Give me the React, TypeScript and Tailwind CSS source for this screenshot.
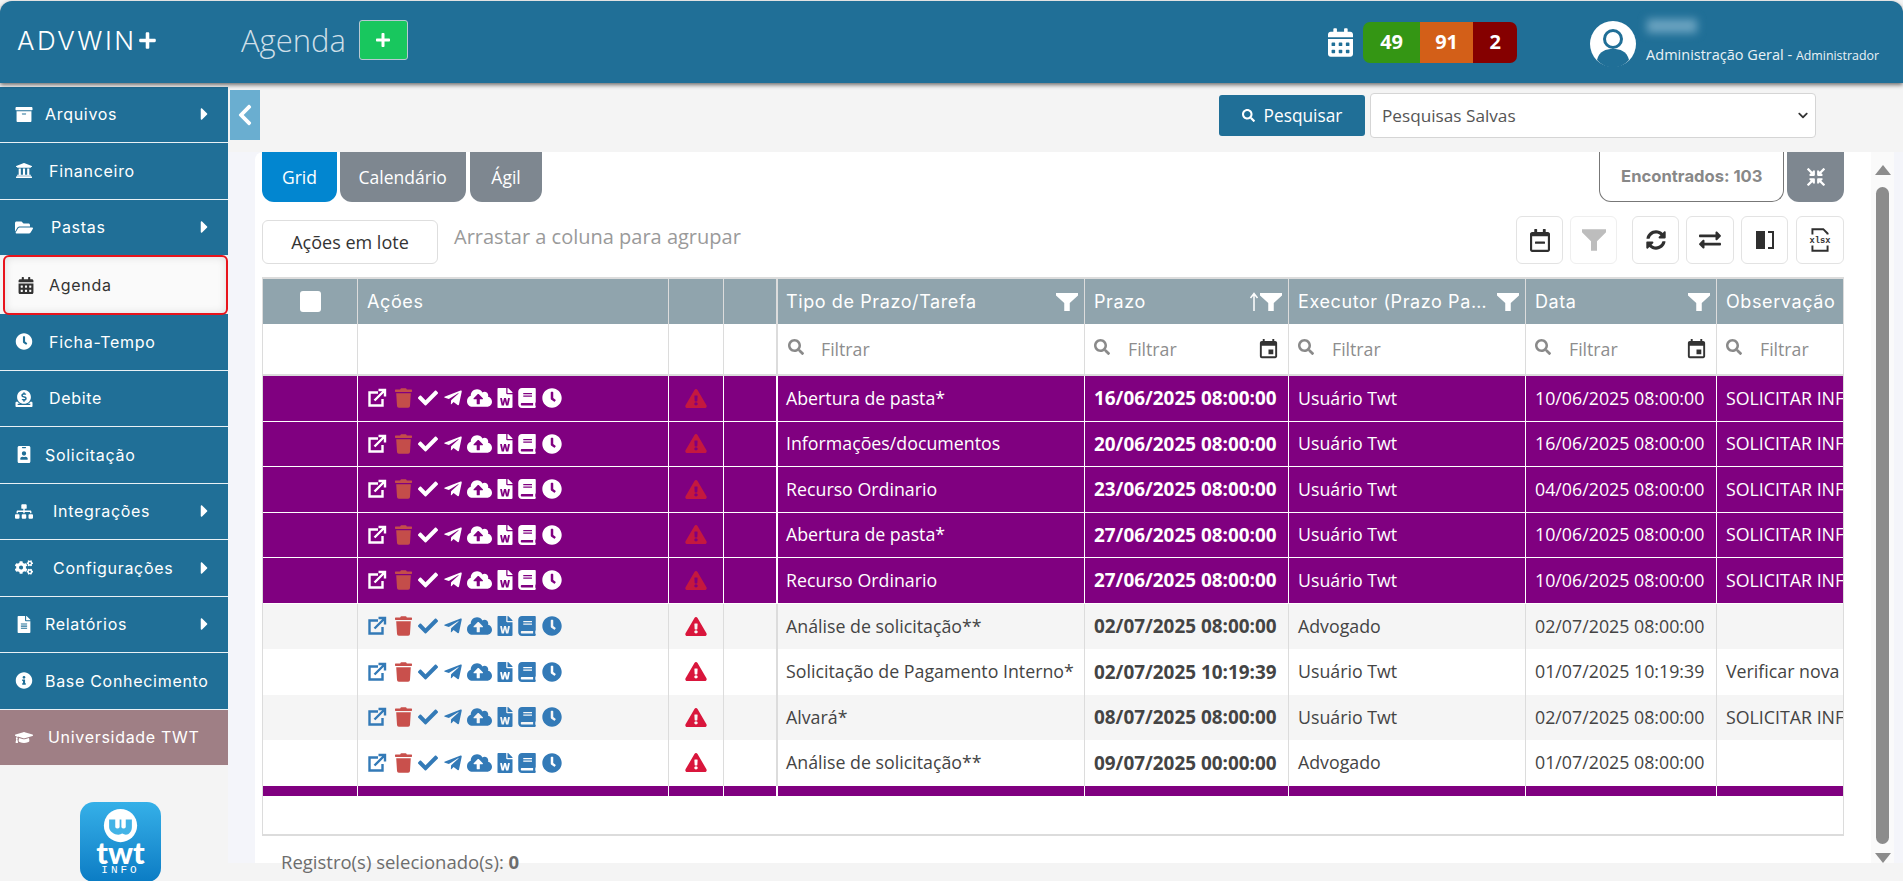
import React from 'react';
import {
  FaArchive, FaBook, FaCalendarAlt, FaCaretRight, FaCheck, FaChevronDown, FaChevronLeft, FaClock, FaCloudUploadAlt,
  FaCogs, FaCompressArrowsAlt, FaDonate, FaExchangeAlt, FaExclamationTriangle, FaFileAlt, FaFileWord, FaFolderOpen,
  FaGraduationCap, FaIdBadge, FaInfoCircle, FaPlus, FaRegCalendarMinus, FaSearch, FaSitemap, FaSyncAlt,
  FaTelegramPlane, FaTrash, FaUniversity,
} from 'react-icons/fa';
import { MdEvent } from 'react-icons/md';

const menu = [
  { label: 'Arquivos', icon: FaArchive, gap: 'ml-[12px]', caret: true },
  { label: 'Financeiro', icon: FaUniversity, gap: 'ml-[16px]' },
  { label: 'Pastas', icon: FaFolderOpen, gap: 'ml-[18px]', caret: true },
  { label: 'Agenda', icon: FaCalendarAlt, gap: 'ml-[14px]', active: true },
  { label: 'Ficha-Tempo', icon: FaClock, gap: 'ml-[16px]' },
  { label: 'Debite', icon: FaDonate, gap: 'ml-[16px]' },
  { label: 'Solicitação', icon: FaIdBadge, gap: 'ml-[12px]' },
  { label: 'Integrações', icon: FaSitemap, gap: 'ml-[20px]', caret: true },
  { label: 'Configurações', icon: FaCogs, gap: 'ml-[20px]', caret: true },
  { label: 'Relatórios', icon: FaFileAlt, gap: 'ml-[12px]', caret: true },
  { label: 'Base Conhecimento', icon: FaInfoCircle, gap: 'ml-[12px]' },
  { label: 'Universidade TWT', icon: FaGraduationCap, gap: 'ml-[15px]', special: true },
];

const rows = [
  ['Abertura de pasta*', '16/06/2025 08:00:00', 'Usuário Twt', '10/06/2025 08:00:00', 'SOLICITAR INFORMAÇÕES', true],
  ['Informações/documentos', '20/06/2025 08:00:00', 'Usuário Twt', '16/06/2025 08:00:00', 'SOLICITAR INFORMAÇÕES', true],
  ['Recurso Ordinario', '23/06/2025 08:00:00', 'Usuário Twt', '04/06/2025 08:00:00', 'SOLICITAR INFORMAÇÕES', true],
  ['Abertura de pasta*', '27/06/2025 08:00:00', 'Usuário Twt', '10/06/2025 08:00:00', 'SOLICITAR INFORMAÇÕES', true],
  ['Recurso Ordinario', '27/06/2025 08:00:00', 'Usuário Twt', '10/06/2025 08:00:00', 'SOLICITAR INFORMAÇÕES', true],
  ['Análise de solicitação**', '02/07/2025 08:00:00', 'Advogado', '02/07/2025 08:00:00', '', false],
  ['Solicitação de Pagamento Interno*', '02/07/2025 10:19:39', 'Usuário Twt', '01/07/2025 10:19:39', 'Verificar nova documentação', false],
  ['Alvará*', '08/07/2025 08:00:00', 'Usuário Twt', '02/07/2025 08:00:00', 'SOLICITAR INFORMAÇÕES', false],
  ['Análise de solicitação**', '09/07/2025 00:00:00', 'Advogado', '01/07/2025 08:00:00', '', false],
] as const;

const gridCols = 'grid grid-cols-[94px_311px_55px_53px_308px_204px_237px_191px_127px]';

const Funnel = ({ className }: { className?: string }) => (
  <svg viewBox="0 0 20 20" className={className} fill="currentColor" preserveAspectRatio="none">
    <path d="M0 1h20v2.500L12.500 11v8h-5v-8L0 3.500z" />
  </svg>
);

const ShareIcon = () => (
  <svg viewBox="0 0 20 20" className="h-[20px] w-[20px]" fill="none" stroke="currentColor" strokeWidth="2.400">
    <path d="M11 4.500H2.500v13h13V11" />
    <path d="M7.500 12.500L17 3M11.500 2H18v6.500" />
  </svg>
);

const RowIcons = ({ purple }: { purple: boolean }) => (
  <div className={`flex items-center ${purple ? 'text-white' : 'text-[#337ab7]'}`}>
    <ShareIcon />
    <FaTrash className={`ml-[8px] h-[20px] w-[17px] ${purple ? 'text-[#c44d4a]' : 'text-[#c9504c]'}`} />
    <FaCheck className="ml-[6px] h-[20px] w-[20px]" />
    <FaTelegramPlane className="ml-[6px] h-[20px] w-[18px]" />
    <FaCloudUploadAlt className="ml-[5px] h-[20px] w-[25px]" />
    <FaFileWord className="ml-[5px] h-[20px] w-[16px]" />
    <FaBook className="ml-[5px] h-[20px] w-[18px]" />
    <FaClock className="ml-[6px] h-[20px] w-[20px]" />
  </div>
);

const HeadCell = ({ label, arrow, thick, filter }: { label?: string; arrow?: boolean; thick?: boolean; filter?: boolean }) => (
  <div className={`flex items-center gap-[3px] overflow-hidden border-l border-[#dcdcdc] pr-[6px] text-white ${thick ? 'border-l-2 pl-[8px]' : 'pl-[9px]'}`}>
    <span className="flex-1 truncate font-['Inter',sans-serif] text-[18px] tracking-[0.6px]">{label}</span>
    {arrow && (
      <svg viewBox="0 0 10 20" className="mr-[-2px] h-[20px] w-[10px]" fill="none" stroke="currentColor" strokeWidth="1.500">
        <path d="M5 19V2M1.500 6L5 1.500 8.500 6" />
      </svg>
    )}
    {filter && <Funnel className="h-[20px] w-[22px] shrink-0" />}
  </div>
);

const FilterCell = ({ calendar }: { calendar?: boolean }) => (
  <div className="flex items-center border-l border-[#dcdcdc] pl-[9px] pr-[8px]">
    <FaSearch className="mb-1 h-[16px] w-[16px] shrink-0 text-[#8a8a8a]" />
    <span className="ml-[18px] flex-1 text-[17.700px] text-[#8d8d8d]">Filtrar</span>
    {calendar && <MdEvent className="h-[23px] w-[23px] shrink-0 text-[#333]" />}
  </div>
);

const TwtLogo = () => (
  <div className="ml-[80px] mt-[36px] h-[80px] w-[81px] shrink-0 rounded-[14px] bg-gradient-to-b from-[#35b0e8] to-[#0a7cc4] pt-[6px] text-center text-white">
    <svg viewBox="0 0 40 40" className="mx-auto h-[35px] w-[37px]">
      <circle cx="20" cy="20" r="19" fill="#fff" />
      <path d="M7 13h7v9a3 3 0 0 0 5 0v-9h2v9a3 3 0 0 0 5 0v-9h7v9c0 6-5 10-9 8-2-1-2-1-4 0-4 2-13-2-13-8z" fill="#43b3e6" />
    </svg>
    <div className="mt-[-3px] font-['Lato',sans-serif] text-[31px] font-black leading-[24px]">twt</div>
    <div className="font-['Liberation_Mono',monospace] text-[11px] leading-[12px] tracking-[3px]">INFO</div>
  </div>
);

const ToolButton = ({ className, children }: { className?: string; children: React.ReactNode }) => (
  <button className={`flex h-[48px] items-center justify-center rounded-[6px] border border-[#e3e3e3] bg-white text-[#2f2f2f] ${className}`}>
    {children}
  </button>
);

const Sidebar = () => (
  <aside className="flex h-full w-[228px] shrink-0 flex-col pt-[3.500px]">
    {menu.map(({ label, icon: Icon, gap, caret, active, special }) => (
      <div
        key={label}
        className={
          active
            ? 'z-10 mb-[-1px] ml-[3px] mt-[-1px] flex h-[60px] shrink-0 items-center rounded-[6px] border-2 border-[#e8141c] bg-[#fafafa] pl-[12px] text-[#333] shadow-[inset_0_0_8px_rgba(0,0,0,0.12)]'
            : `flex h-[56.500px] shrink-0 items-center border-b border-white/90 pl-[15px] text-white ${special ? 'bg-[#9f7f85]' : 'bg-[#206f97]'}`
        }
      >
        <Icon className="h-[17px] w-[18px] shrink-0" />
        <span className={`${gap} flex-1 whitespace-nowrap font-['Inter',sans-serif] text-[16px] tracking-[0.7px]`}>{label}</span>
        {caret && <FaCaretRight className="mr-[17px] h-[20px] w-[13px]" />}
      </div>
    ))}
    <TwtLogo />
  </aside>
);

export default function App() {
  return (
    <div className="flex h-[881px] flex-col overflow-hidden bg-[#f4f4f4] pt-px font-['Open_Sans',sans-serif]">
      <header className="z-20 flex h-[82px] shrink-0 items-center rounded-t-xl bg-[#206f97] pb-[4px] pl-[17px] pr-[24px] text-white shadow-[0_2px_4px_rgba(0,0,0,0.55)]">
        <div className="flex w-[224px] items-center font-['Inter',sans-serif] text-[26px] font-light tracking-[2.500px]">
          ADVWIN
          <FaPlus className="ml-[1px] h-[19px] w-[19px]" />
        </div>
        <span className="text-[31px] font-light text-[#cfdfe8]">Agenda</span>
        <button className="ml-[13px] flex h-[40px] w-[49px] items-center justify-center rounded-[3px] border border-[#b9c9d2] bg-[#18c75e]">
          <FaPlus className="h-[16px] w-[16px]" />
        </button>
        <div className="flex-1" />
        <FaCalendarAlt className="mr-[10px] mt-[4px] h-[29px] w-[25px]" />
        <div className="mt-[4px] flex h-[41px] overflow-hidden rounded-[7px] text-[20px] font-bold">
          <span className="flex w-[57px] items-center justify-center bg-[#349614]">49</span>
          <span className="flex w-[53px] items-center justify-center bg-[#d35f18]">91</span>
          <span className="flex w-[44px] items-center justify-center bg-[#850000]">2</span>
        </div>
        <svg viewBox="0 0 46 46" className="ml-[73px] mt-[7px] h-[46px] w-[46px]">
          <circle cx="23" cy="23" r="23" fill="#fff" />
          <circle cx="23" cy="18" r="8.500" fill="#fff" stroke="#206f97" strokeWidth="3" />
          <path d="M7 39c2-9 9-11 16-11s14 2 16 11a21 21 0 0 1-32 0z" fill="#206f97" />
        </svg>
        <div className="ml-[10px] mt-[4px] flex flex-col whitespace-nowrap">
          <span className="ml-[1px] h-[14px] w-[50px] bg-[#6aa3c0] blur-[4px]" />
          <span className="mt-[13px] text-[14.500px] leading-[18px] text-[#eaf2f6]">
            Administração Geral - <span className="text-[12.400px]">Administrador</span>
          </span>
        </div>
      </header>

      <div className="flex min-h-0 flex-1">
        <Sidebar />
        <main className="flex min-w-0 flex-1 flex-col">
          <div className="flex h-[69px] shrink-0 items-start">
            <button className="ml-[2px] mt-[7px] flex h-[50px] w-[30px] items-center justify-center bg-[#6aaed0] text-white">
              <FaChevronLeft className="h-[24px] w-[16px]" />
            </button>
            <button className="ml-[959px] mt-[12px] flex h-[41px] w-[146px] items-center justify-center gap-[9px] rounded-[3px] bg-[#206f97] text-[17.300px] text-white">
              <FaSearch className="h-[13px] w-[13px]" />
              Pesquisar
            </button>
            <div className="ml-[5px] mt-[10px] flex h-[45px] w-[446px] items-center rounded-[4px] border border-[#d5d5d5] bg-white pl-[11px] pr-[6px] text-[17.200px] text-[#555]">
              <span className="flex-1">Pesquisas Salvas</span>
              <FaChevronDown className="h-[11px] w-[12px] text-[#333]" />
            </div>
          </div>

          <div className="flex h-[711px] shrink-0 bg-[#f4f5fa] pl-[27px] pr-[9px]">
            <section className="relative h-[711px] w-[1639px] rounded-tl-lg bg-white pl-[7px] pr-[50px]">
              <div className="flex h-[50px] text-[17.500px] text-white">
                <button className="h-[50px] w-[75px] rounded-b-xl bg-[#0286d0]">Grid</button>
                <button className="ml-[3px] h-[50px] w-[126px] rounded-b-xl bg-[#7e8790]">Calendário</button>
                <button className="ml-[4px] h-[50px] w-[73px] rounded-b-xl bg-[#7e8790]">Ágil</button>
                <div className="ml-[1057px] flex h-[50px] w-[185px] items-center justify-center rounded-b-xl border border-t-0 border-[#777] font-['Inter',sans-serif] text-[16.600px] font-bold text-[#888]">
                  Encontrados: 103
                </div>
                <button className="ml-[3px] flex h-[50px] w-[57px] items-center justify-center rounded-b-xl bg-[#7e8790]">
                  <FaCompressArrowsAlt className="h-[18px] w-[18px]" />
                </button>
              </div>

              <div className="mt-[14px] flex h-[48px] items-start">
                <button className="mt-[4px] h-[44px] w-[176px] rounded-[6px] border border-[#dedede] bg-white text-[18px] text-[#333]">Ações em lote</button>
                <span className="ml-[16px] mt-[7px] text-[20px] leading-[27px] text-[#9a9a9a]">Arrastar a coluna para agrupar</span>
                <div className="flex-1" />
                <ToolButton className="w-[47px]"><FaRegCalendarMinus className="h-[23px] w-[20px]" /></ToolButton>
                <ToolButton className="ml-[7px] w-[47px] border-[#efefef]"><Funnel className="h-[24px] w-[24px] text-[#bdbdbd]" /></ToolButton>
                <ToolButton className="ml-[15px] w-[47px]"><FaSyncAlt className="h-[20px] w-[20px]" /></ToolButton>
                <ToolButton className="ml-[7px] w-[48px]"><FaExchangeAlt className="h-[22px] w-[24px]" /></ToolButton>
                <ToolButton className="ml-[7px] w-[47px]">
                  <svg viewBox="0 0 20 20" className="h-[20px] w-[20px]" fill="currentColor">
                    <path d="M1 1h9v18H1zM13 1h6v18h-6v-2h4V3h-4z" />
                  </svg>
                </ToolButton>
                <ToolButton className="ml-[8px] w-[48px]">
                  <svg viewBox="0 0 24 24" className="h-[26px] w-[26px]" fill="none" stroke="currentColor" strokeWidth="1.800">
                    <path d="M5 7V2h10l4 4v1M5 17v5h14v-5" />
                    <text x="12" y="14.500" textAnchor="middle" fontSize="8" fontFamily="Liberation Mono, monospace" fontWeight="700" fill="currentColor" stroke="none">xlsx</text>
                  </svg>
                </ToolButton>
              </div>

              <div className="mt-[13px] h-[559px] overflow-hidden border border-[#dcdcdc] border-b-2 border-t-2">
                <div className={`${gridCols} h-[45px] bg-[#90a4ad]`}>
                  <div className="flex items-center justify-center">
                    <span className="h-[21px] w-[21px] rounded-[3px] bg-white" />
                  </div>
                  <HeadCell label="Ações" />
                  <HeadCell />
                  <HeadCell />
                  <HeadCell label="Tipo de Prazo/Tarefa" thick filter />
                  <HeadCell label="Prazo" arrow filter />
                  <HeadCell label="Executor (Prazo Parte)" filter />
                  <HeadCell label="Data" filter />
                  <HeadCell label="Observação" />
                </div>
                <div className={`${gridCols} h-[52px] border-b-2 border-[#dcdcdc]`}>
                  <div />
                  <div className="border-l border-[#dcdcdc]" />
                  <div className="border-l border-[#dcdcdc]" />
                  <div className="border-l border-[#dcdcdc]" />
                  <div className="flex items-center border-l-2 border-[#dcdcdc] pl-[10px]">
                    <FaSearch className="mb-1 h-[16px] w-[16px] text-[#8a8a8a]" />
                    <span className="ml-[17px] text-[17.700px] text-[#8d8d8d]">Filtrar</span>
                  </div>
                  <FilterCell calendar />
                  <FilterCell />
                  <FilterCell calendar />
                  <FilterCell />
                </div>
                {rows.map(([tipo, prazo, executor, data, obs, purple], i) => (
                  <div
                    key={i}
                    className={`${gridCols} h-[45.500px] text-[17.800px] ${
                      purple ? 'border-b border-white bg-[#800080] text-white' : i % 2 === 1 ? 'bg-[#f5f5f5] text-[#444]' : 'bg-white text-[#444]'
                    }`}
                  >
                    <div />
                    <div className={`flex items-center border-l pl-[9px] ${purple ? 'border-white' : 'border-[#dcdcdc]'}`}>
                      <RowIcons purple={purple} />
                    </div>
                    <div className={`flex items-center justify-center border-l ${purple ? 'border-white' : 'border-[#dcdcdc]'}`}>
                      <FaExclamationTriangle className={`h-[19px] w-[22px] ${purple ? 'text-[#c4183f]' : 'text-[#d9163c]'}`} />
                    </div>
                    <div className={`border-l ${purple ? 'border-white' : 'border-[#dcdcdc]'}`} />
                    <div className={`flex items-center overflow-hidden whitespace-nowrap border-l-2 pl-[8px] ${purple ? 'border-white' : 'border-[#dcdcdc]'}`}>{tipo}</div>
                    <div className={`flex items-center overflow-hidden whitespace-nowrap border-l pl-[9px] text-[18.900px] font-bold ${purple ? 'border-white' : 'border-[#dcdcdc]'}`}>{prazo}</div>
                    <div className={`flex items-center overflow-hidden whitespace-nowrap border-l pl-[9px] ${purple ? 'border-white' : 'border-[#dcdcdc]'}`}>{executor}</div>
                    <div className={`flex items-center overflow-hidden whitespace-nowrap border-l pl-[9px] ${purple ? 'border-white' : 'border-[#dcdcdc]'}`}>{data}</div>
                    <div className={`flex items-center overflow-hidden whitespace-nowrap border-l pl-[9px] ${purple ? 'border-white' : 'border-[#dcdcdc]'}`}>{obs}</div>
                  </div>
                ))}
                <div className={`${gridCols} h-[10px] bg-[#800080]`}>
                  <div />
                  <div className="border-l border-white" />
                  <div className="border-l border-white" />
                  <div className="border-l border-white" />
                  <div className="border-l-2 border-white" />
                  <div className="border-l border-white" />
                  <div className="border-l border-white" />
                  <div className="border-l border-white" />
                  <div className="border-l border-white" />
                </div>
              </div>

              <p className="mt-[14px] pl-[19px] text-[18.500px] leading-[24px] text-[#6d6d6d]">
                Registro(s) selecionado(s): <b>0</b>
              </p>

              <div className="absolute right-0 top-0 flex h-full w-[23px] flex-col items-center bg-[#fafafa]">
                <span className="mt-[13px] h-0 w-0 border-x-[8px] border-b-[10px] border-x-transparent border-b-[#8c8c8c]" />
                <span className="mt-[12px] h-[659px] w-[13px] rounded-full bg-[#8c8c8c]" />
                <span className="mt-[9px] h-0 w-0 border-x-[8px] border-t-[10px] border-x-transparent border-t-[#8c8c8c]" />
              </div>
            </section>
          </div>
        </main>
      </div>
    </div>
  );
}
